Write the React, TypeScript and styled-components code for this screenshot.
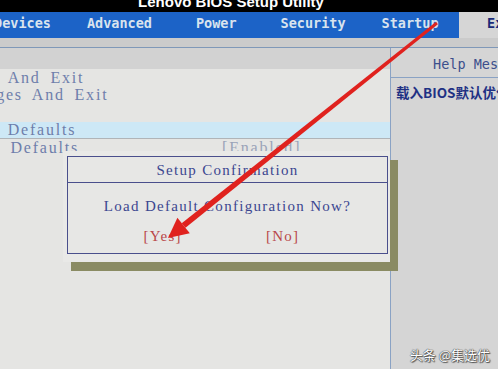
import React from "react";
import styled, { createGlobalStyle } from "styled-components";

const Global = createGlobalStyle`
  *, *::before, *::after { box-sizing: border-box; }
  html, body { margin: 0; padding: 0; background: #e5e5e3; }
  body { width: 498px; height: 369px; overflow: hidden; }
`;

const Screen = styled.div`
  position: relative;
  width: 498px;
  height: 369px;
  overflow: hidden;
  display: flex;
  flex-direction: column;
  background: #e5e5e3;
`;

const TitleBar = styled.div`
  height: 12px;
  flex: none;
  background: #000;
  overflow: hidden;
  display: flex;
  justify-content: center;
  padding-right: 36px;
`;

const TitleText = styled.div`
  margin-top: -6px;
  font-family: "Liberation Sans", Arial, sans-serif;
  font-weight: bold;
  font-size: 15px;
  line-height: 15px;
  color: #fff;
  white-space: nowrap;
`;

const TabBar = styled.div`
  height: 26px;
  flex: none;
  display: grid;
  grid-template-columns: 459px 39px;
`;

const TabStrip = styled.div`
  background: #1c63c7;
  display: flex;
  gap: 40px;
  overflow: hidden;
`;

const Tab = styled.div<{ $shift?: number }>`
  flex: none;
  margin-left: ${(p) => p.$shift ?? 0}px;
  font-family: "DejaVu Sans Mono", monospace;
  font-weight: bold;
  font-size: 13.5px;
  line-height: 23px;
  color: #d9e3ee;
  white-space: nowrap;
`;

const ExitTab = styled.div`
  background: #d6d6d6;
  overflow: hidden;
  padding-left: 28px;
  font-family: "DejaVu Sans Mono", monospace;
  font-weight: bold;
  font-size: 13.5px;
  line-height: 23px;
  color: #1a2a78;
  white-space: nowrap;
`;

const SubBand = styled.div`
  height: 10px;
  flex: none;
  background: #cbcbcb;
  border-bottom: 1px solid #7f98b8;
`;

const Main = styled.div`
  flex: 1;
  display: flex;
  min-height: 0;
`;

const LeftPanel = styled.div`
  width: 390px;
  flex: none;
  overflow: hidden;
  background: #e5e5e3;
  display: flex;
  flex-direction: column;
`;

const LeftHeader = styled.div`
  height: 21px;
  background: #d2d2d2;
`;

const ItemList = styled.div`
  margin-left: -117px;
  display: flex;
  flex-direction: column;
`;

const Item = styled.div<{ $active?: boolean }>`
  height: 17.5px;
  display: flex;
  align-items: center;
  width: 507px;
  background: ${(p) => (p.$active ? "#cde8f6" : "transparent")};
  border-bottom: ${(p) => (p.$active ? "1px solid #b0b4b8" : "none")};
  font-family: "Liberation Serif", "Times New Roman", serif;
  font-size: 16px;
  letter-spacing: 1.8px;
  word-spacing: 4px;
  color: #6e7eab;
  white-space: nowrap;
`;

const ItemLabel = styled.span`
  width: 339px;
  flex: none;
`;

const ItemValue = styled.span`
  color: #9aa3b8;
`;

const RightPanel = styled.div`
  flex: 1;
  border-left: 1px solid #8aa2c4;
  background: #d5d5d5;
  overflow: hidden;
  display: flex;
  flex-direction: column;
`;

const HelpHeader = styled.div`
  height: 30px;
  border-bottom: 1px solid #8aa2c4;
  padding-left: 42px;
  font-family: "DejaVu Sans Mono", monospace;
  font-size: 13.5px;
  line-height: 32px;
  color: #3c4f8c;
  white-space: nowrap;
`;

const HelpText = styled.div`
  padding: 5px 0 0 5px;
  font-family: "Noto Sans CJK SC", "Noto Sans", sans-serif;
  font-weight: bold;
  font-size: 13.5px;
  line-height: 18px;
  color: #1f3184;
  white-space: nowrap;
`;

const DialogFrame = styled.div`
  position: absolute;
  left: 63px;
  top: 151px;
  width: 327px;
  padding: 5px 2px 8px 4px;
  background: #e9e9e7;
  box-shadow: 8px 9px 0 #8a8b63;
`;

const DialogBox = styled.div`
  border: 1px solid #4a4f8c;
  background: #e7e7e5;
  display: flex;
  flex-direction: column;
  font-family: "Liberation Serif", "Times New Roman", serif;
  font-size: 15px;
  letter-spacing: 1.3px;
  color: #3b4690;
`;

const DialogTitle = styled.div`
  height: 26px;
  line-height: 27px;
  text-align: center;
  border-bottom: 1px solid #4a4f8c;
`;

const DialogBody = styled.div`
  padding: 14px 0 8px;
  display: flex;
  flex-direction: column;
  align-items: center;
  gap: 12px;
  line-height: 18px;
`;

const ButtonRow = styled.div`
  display: flex;
  gap: 84px;
  padding-right: 12px;
`;

const DialogButton = styled.span`
  color: #b9484a;
`;

const Overlay = styled.svg`
  position: absolute;
  left: 0;
  top: 0;
  pointer-events: none;
`;

const Watermark = styled.div`
  position: absolute;
  right: 8px;
  bottom: 6px;
  font-family: "Noto Sans CJK SC", "Noto Sans", sans-serif;
  font-size: 13px;
  line-height: 16px;
  color: #fff;
  text-shadow: 0 0 1px #333, 0 0 1px #333, 1px 1px 1px #555;
  white-space: nowrap;
`;

export default function App() {
  return (
    <>
      <Global />
      <Screen>
        <TitleBar>
          <TitleText>Lenovo BIOS Setup Utility</TitleText>
        </TitleBar>
        <TabBar>
          <TabStrip>
            <Tab $shift={-6}>Devices</Tab>
            <Tab $shift={-4}>Advanced</Tab>
            <Tab $shift={4}>Power</Tab>
            <Tab $shift={4}>Security</Tab>
            <Tab $shift={-4}>Startup</Tab>
          </TabStrip>
          <ExitTab>Exit</ExitTab>
        </TabBar>
        <SubBand />
        <Main>
          <LeftPanel>
            <LeftHeader />
            <ItemList>
              <Item>
                <ItemLabel>Save Changes And Exit</ItemLabel>
              </Item>
              <Item>
                <ItemLabel>Discard Changes And Exit</ItemLabel>
              </Item>
              <Item />
              <Item $active>
                <ItemLabel>Load Optimal Defaults</ItemLabel>
              </Item>
              <Item>
                <ItemLabel>OS Optimized Defaults</ItemLabel>
                <ItemValue>[Enabled]</ItemValue>
              </Item>
            </ItemList>
          </LeftPanel>
          <RightPanel>
            <HelpHeader>Help Message</HelpHeader>
            <HelpText>载入BIOS默认优化设置</HelpText>
          </RightPanel>
        </Main>

        <DialogFrame>
          <DialogBox>
            <DialogTitle>Setup Confirmation</DialogTitle>
            <DialogBody>
              <div>Load Default Configuration Now?</div>
              <ButtonRow>
                <DialogButton>[Yes]</DialogButton>
                <DialogButton>[No]</DialogButton>
              </ButtonRow>
            </DialogBody>
          </DialogBox>
        </DialogFrame>

        <Overlay width="498" height="369" viewBox="0 0 498 369">
          <polygon
            points="437.9,24.2 436.1,21.8 181.7,223.2 185.5,227.8"
            fill="#e0221e"
          />
          <polygon
            points="168,238 189.8,233.3 177.4,217.7"
            fill="#e0221e"
          />
        </Overlay>

        <Watermark>头条 @集选优</Watermark>
      </Screen>
    </>
  );
}
